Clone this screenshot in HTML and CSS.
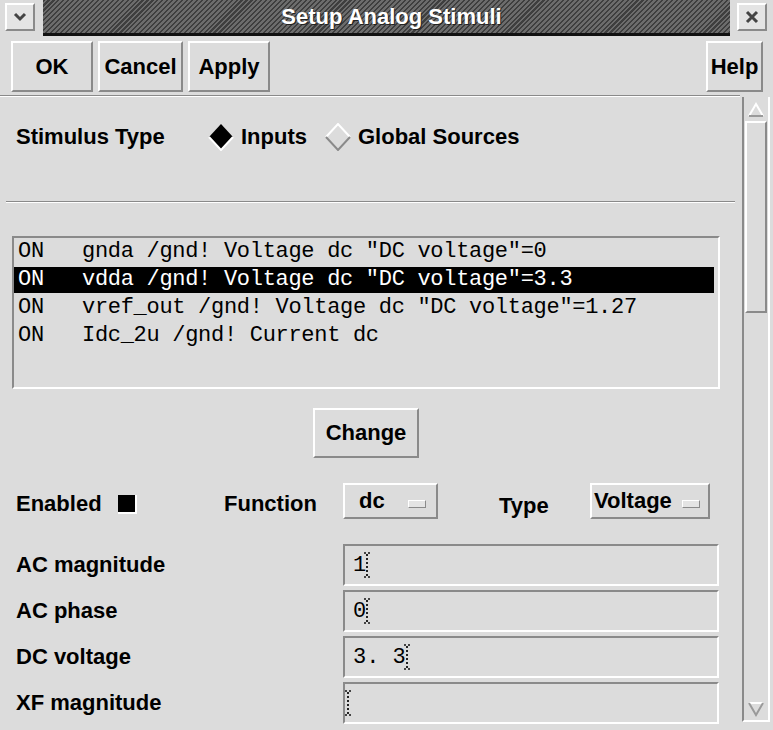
FILE: index.html
```html
<!DOCTYPE html>
<html lang="en">
<head>
  <meta http-equiv="Content-Type" content="text/html; charset=UTF-8">
  <title>Setup Analog Stimuli</title>
  <link rel="stylesheet" href="styles.css">
</head>
<body>
  <div class="window">
    <!-- title bar -->
    <div class="titlebar">
      <div class="frame-cell">
        <span class="wm-btn">
          <svg width="20" height="16" viewBox="0 0 20 16"><path d="M5 5 L10 10 L15 5" fill="none" stroke="#444" stroke-width="3"/></svg>
        </span>
      </div>
      <div class="title-stripes"><span class="title">Setup Analog Stimuli</span></div>
      <div class="frame-cell right">
        <span class="wm-btn">
          <svg width="20" height="18" viewBox="0 0 20 18"><path d="M5 4 L15 14 M15 4 L5 14" fill="none" stroke="#444" stroke-width="3"/></svg>
        </span>
      </div>
    </div>

    <!-- buttons -->
    <div class="toolbar">
      <button class="btn btn-ok">OK</button>
      <button class="btn btn-cancel">Cancel</button>
      <button class="btn btn-apply">Apply</button>
      <button class="btn btn-help">Help</button>
    </div>
    <div class="tsep"></div>

    <div class="main">
      <div class="content">
        <div class="stim-row">
          <span class="stim-label">Stimulus Type</span>
          <span class="radio radio-inputs">
            <svg width="26" height="28" viewBox="0 0 26 28">
              <polygon points="13,1 25,14 13,27 1,14" fill="#000"/>
              <path d="M1 14 L13 27 L25 14" fill="none" stroke="#fff" stroke-width="2"/>
            </svg>
            <span>Inputs</span>
          </span>
          <span class="radio">
            <svg width="26" height="28" viewBox="0 0 26 28">
              <path d="M1 14 L13 1 L25 14" fill="none" stroke="#fff" stroke-width="2"/>
              <path d="M1 14 L13 27 L25 14" fill="none" stroke="#8a8a8a" stroke-width="2"/>
            </svg>
            <span>Global Sources</span>
          </span>
        </div>
        <div class="sep"></div>

        <div class="listbox">
          <div class="row"><span class="on">ON</span>gnda /gnd! Voltage dc "DC voltage"=0</div>
          <div class="row selected"><span class="on">ON</span>vdda /gnd! Voltage dc "DC voltage"=3.3</div>
          <div class="row"><span class="on">ON</span>vref_out /gnd! Voltage dc "DC voltage"=1.27</div>
          <div class="row"><span class="on">ON</span>Idc_2u /gnd! Current dc</div>
        </div>

        <div class="change-row">
          <button class="btn btn-change">Change</button>
        </div>

        <div class="func-row">
          <span class="lbl-enabled">Enabled</span>
          <span class="check-cell"><span class="check"></span></span>
          <span class="lbl-function">Function</span>
          <span class="optmenu opt-dc">dc<span class="opt-ind"></span></span>
          <span class="lbl-type">Type</span>
          <span class="optmenu opt-type">Voltage<span class="opt-ind"></span></span>
        </div>

        <div class="fields">
          <span class="flabel">AC magnitude</span>
          <span class="field">1<span class="cursor"></span></span>
          <span class="flabel">AC phase</span>
          <span class="field">0<span class="cursor"></span></span>
          <span class="flabel">DC voltage</span>
          <span class="field">3.&nbsp;3<span class="cursor"></span></span>
          <span class="flabel">XF magnitude</span>
          <span class="field empty"><span class="cursor"></span></span>
        </div>
      </div>

      <div class="scrollbar">
        <div class="arrow">
          <svg width="20" height="18" viewBox="0 0 20 18"><path d="M3 15 L10 3 L17 15" fill="none" stroke="#fff" stroke-width="2"/><path d="M3 15 L17 15" stroke="#9a9a9a" stroke-width="2"/></svg>
        </div>
        <div class="thumb"></div>
        <div class="trough"></div>
        <div class="arrow">
          <svg width="20" height="18" viewBox="0 0 20 18"><path d="M3 3 L17 3" stroke="#fff" stroke-width="2"/><path d="M3 3 L10 15 L17 3" fill="none" stroke="#9a9a9a" stroke-width="2"/></svg>
        </div>
      </div>
    </div>
  </div>
</body>
</html>
```

FILE: styles.css
```css
* {
  margin: 0;
  padding: 0;
  box-sizing: border-box;
}

body {
  width: 773px;
  height: 730px;
  overflow: hidden;
  background-color: #dcdcdc;
  font-family: "Liberation Sans", Arial, sans-serif;
  font-weight: bold;
  font-size: 22px;
  color: #000;
}

/* title bar */
.titlebar {
  display: flex;
  height: 36px;
}

.frame-cell {
  width: 43px;
  padding: 3px 0 0 5px;
}

.frame-cell.right {
  padding-left: 7px;
}

.wm-btn {
  display: flex;
  align-items: center;
  justify-content: center;
  width: 30px;
  height: 28px;
  background-color: #e4e4e4;
  border: 2px solid #fff;
  border-right-color: #8a8a8a;
  border-bottom-color: #8a8a8a;
}

.title-stripes {
  flex: 1;
  display: flex;
  align-items: center;
  justify-content: center;
  padding-left: 10px;
  background: repeating-linear-gradient(135deg, #3e3e3e 0 1.5px, #6c6c6c 1.5px 3.5px);
  border-bottom: 3px solid #111;
}

.title {
  color: #fff;
  text-shadow: 1px 1px 0 #222;
}

/* buttons */
.btn {
  font-family: inherit;
  font-weight: bold;
  font-size: 22px;
  color: #000;
  height: 51px;
  background-color: #dcdcdc;
  border: 2px solid #fff;
  border-right-color: #8a8a8a;
  border-bottom-color: #8a8a8a;
}

.toolbar {
  display: flex;
  gap: 5px;
  height: 56px;
  padding: 5px 10px 0 11px;
}

.btn-ok { width: 82px; }
.btn-cancel { width: 85px; }
.btn-apply { width: 82px; }
.btn-help { width: 57px; margin-left: auto; }

.tsep {
  margin-top: 3px;
  width: 740px;
  height: 2px;
  border-top: 1px solid #8a8a8a;
  border-bottom: 1px solid #fff;
}

.main {
  display: flex;
  height: 633px;
}

.content {
  width: 740px;
}

/* stimulus type */
.stim-row {
  display: flex;
  align-items: center;
  height: 80px;
  padding-left: 16px;
}

.stim-label {
  width: 192px;
}

.radio {
  display: flex;
  align-items: center;
  gap: 7px;
}

.radio-inputs {
  width: 117px;
}

.sep {
  margin: 24px 0 0 6px;
  width: 729px;
  height: 2px;
  border-top: 1px solid #8a8a8a;
  border-bottom: 1px solid #fff;
}

/* list */
.listbox {
  margin: 33px 0 0 12px;
  width: 708px;
  height: 153px;
  padding-top: 1px;
  border: 2px solid #8a8a8a;
  border-right-color: #fff;
  border-bottom-color: #fff;
  font-family: "Liberation Mono", "DejaVu Sans Mono", monospace;
  font-weight: normal;
  font-size: 22px;
  letter-spacing: -0.3px;
}

.row {
  height: 26px;
  line-height: 26px;
  margin: 0 4px 2px 0;
  padding-left: 4px;
  white-space: pre;
}

.row .on {
  display: inline-block;
  width: 64px;
}

.row.selected {
  background-color: #000;
  color: #fff;
}

.change-row {
  margin-top: 19px;
  padding-left: 313px;
}

.btn-change {
  width: 106px;
  height: 50px;
}

/* function / type */
.func-row {
  display: flex;
  align-items: center;
  margin-top: 25px;
  height: 36px;
  padding-left: 16px;
}

.lbl-enabled { width: 102px; padding-top: 6px; }
.check-cell { width: 106px; padding-top: 6px; }

.check {
  display: block;
  width: 19px;
  height: 19px;
  background-color: #000;
  border-right: 2px solid #fff;
  border-bottom: 2px solid #fff;
}

.lbl-function { width: 119px; padding-top: 6px; }
.lbl-type { width: 91px; padding-top: 10px; }

.optmenu {
  display: flex;
  align-items: flex-start;
  justify-content: space-between;
  height: 36px;
  padding: 3px 10px 0 14px;
  border: 2px solid #fff;
  border-right-color: #8a8a8a;
  border-bottom-color: #8a8a8a;
}

.opt-dc {
  width: 95px;
  margin-right: 61px;
}

.opt-type {
  width: 120px;
  padding-left: 2px;
  padding-right: 8px;
}

.opt-ind {
  width: 18px;
  height: 8px;
  margin-top: 12px;
  background-color: #e4e4e4;
  border: 1px solid #fff;
  border-right-color: #8a8a8a;
  border-bottom-color: #8a8a8a;
}

/* fields */
.fields {
  display: grid;
  grid-template-columns: 343px 376px;
  grid-auto-rows: 42px;
  row-gap: 4px;
  margin-top: 25px;
}

.flabel {
  display: flex;
  align-items: center;
  padding-left: 16px;
}

.field {
  display: flex;
  align-items: center;
  padding-left: 8px;
  border: 2px solid #8a8a8a;
  border-right-color: #fff;
  border-bottom-color: #fff;
  font-family: "Liberation Mono", "DejaVu Sans Mono", monospace;
  font-weight: normal;
  font-size: 22px;
}

.field.empty {
  padding-left: 2px;
}

/* dotted I-beam text cursor */
.cursor {
  position: relative;
  display: inline-block;
  width: 6px;
  height: 26px;
  margin-left: -2px;
}

.cursor:before {
  content: '';
  position: absolute;
  left: 2px;
  top: 2px;
  bottom: 2px;
  border-left: 2px dotted #222;
}

.cursor:after {
  content: '';
  position: absolute;
  left: 0;
  right: 0;
  top: 0;
  bottom: 0;
  border-top: 2px dotted #444;
  border-bottom: 2px dotted #444;
}

/* scrollbar */
.scrollbar {
  display: flex;
  flex-direction: column;
  margin-left: 2px;
  width: 28px;
  height: 625px;
  padding: 2px 1px 0 1px;
  border-left: 2px solid #8a8a8a;
  border-right: 2px solid #fff;
  border-bottom: 2px solid #fff;
}

.arrow {
  height: 22px;
  display: flex;
  align-items: center;
  justify-content: center;
}

.thumb {
  height: 192px;
  background-color: #dcdcdc;
  border: 2px solid #fff;
  border-right-color: #8a8a8a;
  border-bottom-color: #8a8a8a;
}

.trough {
  flex: 1;
}
```
